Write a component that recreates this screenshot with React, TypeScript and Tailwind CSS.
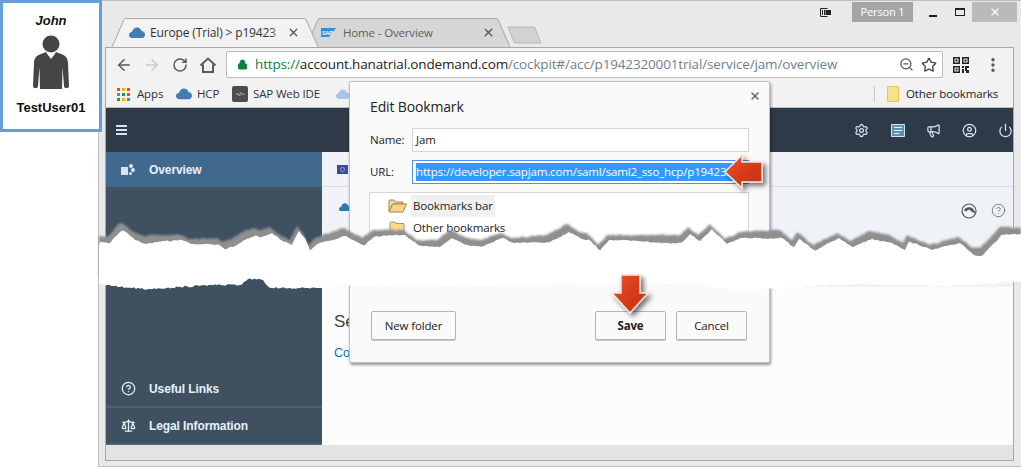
import { ArrowLeft, ArrowRight, RotateCw, Lock, ZoomOut, Star, X, EllipsisVertical, Settings, Megaphone, CircleUser, Power, CircleHelp, Scale } from "lucide-react";

const topEdge: [number, number][] = [[99,236],[107,237],[115,228],[120,223],[125,225],[133,232],[143,236],[157,235],[180,235],[190,239],[217,238],[223,242],[233,238],[243,232],[253,228],[260,230],[270,227],[280,235],[290,240],[297,226],[303,233],[308,245],[317,237],[330,233],[343,228],[353,233],[362,238],[373,230],[403,230],[417,240],[437,240],[450,230],[467,238],[480,240],[500,233],[513,238],[547,235],[567,224],[580,232],[587,233],[598,245],[607,235],[640,235],[680,235],[688,227],[698,235],[710,224],[725,239],[740,232],[780,230],[792,240],[797,232],[813,245],[837,233],[850,241],[870,231],[890,235],[903,243],[907,235],[930,245],[958,237],[973,248],[980,248],[1000,227],[1021,228]];
const bottomEdge: [number, number][] = [[99,284],[120,287],[150,289],[213,285],[240,285],[248,279],[263,280],[270,288],[320,288],[350,285],[380,286],[420,285],[470,286],[520,285],[560,284],[600,285],[660,283],[700,284],[712,288],[760,289],[800,287],[860,284],[940,286],[1021,282]];

function jag(points: [number, number][], start: number, amp: number) {
  const out: [number, number][] = [];
  let seed = start;
  for (let i = 0; i < points.length - 1; i++) {
    const [x1, y1] = points[i];
    const [x2, y2] = points[i + 1];
    const n = Math.max(1, Math.floor((x2 - x1) / 2));
    for (let k = 0; k < n; k++) {
      seed = (seed * 73 + 41) % 101;
      const j = k === 0 ? 0 : (seed / 101 - 0.5) * amp;
      out.push([x1 + ((x2 - x1) * k) / n, y1 + ((y2 - y1) * k) / n + j]);
    }
  }
  out.push(points[points.length - 1]);
  return out;
}
const jt = jag(topEdge, 7, 1.6);
const jw = jag(topEdge, 23, 1.2).map(([x, y]) => [x + 2, y + 6.5 + 1.5 * Math.sin(x / 17)] as [number, number]);
const jb = jag(bottomEdge, 11, 2);
const fmt = (p: [number, number][]) => p.map(([x, y]) => `${x.toFixed(1)},${y.toFixed(1)}`).join(" ");
const whitePoly = fmt([[99, 244], ...jw, [1021, 236], ...[...jb].reverse()]);
const shadowPoly = fmt([...jt, [1021, 275], [99, 275]]);

function Person() {
  return (
    <svg width="38" height="56" viewBox="0 0 38 56" fill="#454545">
      <circle cx="19" cy="10" r="8.5" />
      <path d="M9 20 L14 18 L19 24 L24 18 L29 20 C33 21 36 24 36 29 L37 52 C37 55 32 55 32 52 L30.5 33 L30 55 L8 55 L7.5 33 L6 52 C6 55 1 55 1 52 L2 29 C2 24 5 21 9 20Z" />
      <path d="M14.5 19 L19 20.5 L23.5 19 L19 25Z" fill="#fff" />
    </svg>
  );
}
function Cloud({ w = 16, c = "#417db3" }: { w?: number; c?: string }) {
  return (
    <svg width={w} height={(w * 12) / 17} viewBox="0 0 17 12" fill={c}>
      <path d="M4 12 C1.5 12 0 10.5 0 8.5 C0 6.5 1.5 5.2 3.2 5.2 C3.8 2.2 6 0.5 8.5 0.5 C11 0.5 12.6 2 13.2 4.2 C15.5 4.4 17 6 17 8 C17 10.4 15.4 12 13 12Z" />
    </svg>
  );
}
function Apps() {
  const c = ["#e8453c", "#f4b400", "#e8453c", "#4285f4", "#0f9d58", "#e8453c", "#0f9d58", "#f4b400", "#4285f4"];
  return (
    <div className="grid grid-cols-3 gap-[2px] w-[13px] h-[13px]">
      {c.map((b, i) => <div key={i} style={{ background: b }} className="w-[3px] h-[3px]" />)}
    </div>
  );
}
function Sap() {
  return (
    <svg width="15" height="9" viewBox="0 0 15 9">
      <path d="M0 0 H15 L8 9 H0Z" fill="#2f8fd8" />
      <text x="1" y="6.5" fontSize="5.5" fontWeight="700" fill="#fff" fontFamily="Liberation Sans">SAP</text>
    </svg>
  );
}
function FolderOpen() {
  return (
    <svg width="19" height="14" viewBox="0 0 19 14">
      <path d="M1 12 V2 Q1 1 2 1 H6 L7.5 3 H15 V5 H5 L1 12Z" fill="#f3d9a4" stroke="#a5824d" />
      <path d="M1 13 L4.5 5 H18.5 L15 13Z" fill="#fcd38b" stroke="#a5824d" />
    </svg>
  );
}
function FolderClosed() {
  return (
    <svg width="16" height="14" viewBox="0 0 16 14">
      <path d="M1 13 V2 Q1 1 2 1 H6 L7 2.5 H15 V13Z" fill="#fcd78f" stroke="#b79356" />
    </svg>
  );
}
function Qr() {
  return (
    <svg width="16" height="16" viewBox="0 0 16 16" fill="#222">
      <path fillRule="evenodd" d="M0 0H7V7H0ZM1.5 1.5V5.5H5.5V1.5ZM9 0H16V7H9ZM10.5 1.5V5.5H14.5V1.5ZM0 9H7V16H0ZM1.5 10.5V14.5H5.5V10.5Z" />
      <path d="M2.5 2.5H4.5V4.5H2.5ZM11.500 2.5H13.500V4.500H11.500ZM2.500 11.500H4.500V13.500H2.500ZM9 9H11V11H9ZM12 9H16V11H14V13H16V16H13V14H12ZM9 12H11V16H9Z" />
    </svg>
  );
}
function HomeIcon() {
  return (
    <svg width="18" height="18" viewBox="0 0 18 18" fill="none" stroke="#5a5a5a" strokeWidth="2" strokeLinejoin="miter">
      <path d="M1.500 9.500 L9 2.500 L16.500 9.500" />
      <path d="M4 8.500 V16 H14 V8.500" />
    </svg>
  );
}
function Tab({ active, width, children }: { active?: boolean; width: number; children: React.ReactNode }) {
  return (
    <div style={{ width }} className={`relative h-[29px] flex items-center ${active ? "z-10" : "-ml-[12px]"}`}>
      <svg className="absolute inset-0" width={width} height="29" viewBox={`0 0 ${width} 29`}>
        <path d={`M0 29 L12 1.5 Q13 0.500 14 0.500 H${width - 14} Q${width - 13} 0.500 ${width - 12} 1.500 L${width} 29`} fill={active ? "#f2f2f2" : "#d6d6d6"} stroke="#a9a9a9" />
      </svg>
      <div className="relative flex items-center w-full">{children}</div>
    </div>
  );
}
function NavRow({ icon, label, className = "" }: { icon: React.ReactNode; label: string; className?: string }) {
  return (
    <div className={`h-[35px] flex items-center text-[12px] tracking-[-0.1px] font-bold text-[#e8f1f8] font-['Liberation_Sans',sans-serif] ${className}`}>
      <div className="w-[43px] flex justify-center pl-[1px]">{icon}</div>
      <span>{label}</span>
    </div>
  );
}
function Btn({ children, className = "" }: { children: React.ReactNode; className?: string }) {
  return (
    <div className={`h-[29px] flex items-center justify-center border border-[#b5b5b5] rounded-[2px] bg-[#fafafa] shadow-[0_1px_0_#c8c8c8] text-[11.5px] text-[#222] ${className}`}>{children}</div>
  );
}

export default function App() {
  return (
    <div className="relative w-[1021px] h-[467px] overflow-hidden bg-white font-['Open_Sans',sans-serif] tracking-[-0.15px]">
      {/* browser window */}
      <div className="ml-[98px] w-[923px] h-[467px] border-l border-t border-b border-[#bdbdbd] bg-[#e9e9e9] flex flex-col">
        {/* tab strip */}
        <div className="relative h-[46px] shrink-0 flex items-end pl-[13px]">
          <Tab active width={206}>
            <div className="ml-[17px]"><Cloud /></div>
            <div className="relative ml-[5px] w-[134px] overflow-hidden">
              <span className="block w-[134px] overflow-hidden whitespace-nowrap text-[12px] text-[#333]">Europe (Trial) &gt; p19423</span>
              <div className="absolute right-0 top-0 bottom-0 w-[14px] bg-gradient-to-r from-transparent to-[#f2f2f2]" />
            </div>
            <X size={13} strokeWidth={2.5} className="ml-[3px] text-[#5a5a5a]" />
          </Tab>
          <Tab width={204}>
            <div className="ml-[15px]"><Sap /></div>
            <span className="ml-[7px] w-[139px] text-[11.5px] text-[#5d5d5d] whitespace-nowrap">Home - Overview</span>
            <X size={13} strokeWidth={2.5} className="text-[#5a5a5a]" />
          </Tab>
          <svg className="mb-[3px] -ml-[3px]" width="36" height="18" viewBox="0 0 36 18">
            <path d="M1 1 H26 Q27 1 28 2 L34 17 H9 Q8 17 7 16Z" fill="#d2d2d2" stroke="#b5b5b5" />
          </svg>
          {/* window controls */}
          <div className="absolute right-[4px] top-[1px] flex items-start">
            <svg width="11" height="11" viewBox="0 0 11 11" className="mt-[5px] mr-[21px]" fill="none" stroke="#222">
              <path d="M7.500 1.500H.5V9.500H7.500" /><path d="M2.500 3V8M4.500 3V8" /><rect x="6" y="3.500" width="4.500" height="4" fill="#222" />
            </svg>
            <div className="w-[61px] h-[20px] bg-[#a5a5a5] text-white text-[11px] flex items-center justify-center">Person 1</div>
            <div className="w-[27px] h-[20px] flex items-end justify-center pb-[5px] ml-[6px]"><div className="w-[8px] h-[2px] bg-[#222]" /></div>
            <div className="w-[27px] h-[20px] flex items-center justify-center"><div className="w-[10px] h-[8px] border border-[#222] border-t-2" /></div>
            <div className="w-[45px] h-[20px] bg-[#bababa] flex items-center justify-center ml-[-1px]"><X size={12} strokeWidth={2.5} className="text-white" /></div>
          </div>
        </div>

        {/* inner frame */}
        <div className="ml-[6px] mr-[7px] flex-1 min-h-0 border border-[#a8a8a8] flex flex-col bg-[#f2f2f2] mb-[5px]">
          {/* toolbar */}
          <div className="h-[33px] shrink-0 flex items-center pl-[9px]">
            <ArrowLeft size={18} strokeWidth={2} className="text-[#5a5a5a]" />
            <ArrowRight size={18} strokeWidth={2} className="ml-[10px] text-[#c9c9c9]" />
            <RotateCw size={16} strokeWidth={2.2} className="ml-[11px] text-[#5a5a5a]" />
            <div className="ml-[11px]"><HomeIcon /></div>
            <div className="ml-[9px] w-[717px] h-[27px] bg-white border border-[#bcbcbc] rounded-[2px] flex items-center pl-[10px] pr-[5px]">
              <Lock size={11} fill="#0b8043" className="text-[#0b8043]" />
              <div className="ml-[7px] flex-1 whitespace-nowrap overflow-hidden text-[13.5px] tracking-[-0.15px]">
                <span className="text-[#0b8043]">https://</span><span className="text-[#222]">account.hanatrial.ondemand.com</span><span className="text-[#6f7f8d]">/cockpit#/acc/p1942320001trial/service/jam/overview</span>
              </div>
              <ZoomOut size={15} className="text-[#555]" />
              <Star size={16} strokeWidth={2} className="ml-[7px] text-[#444]" />
            </div>
            <div className="ml-[10px]"><Qr /></div>
            <EllipsisVertical size={18} strokeWidth={2.5} className="ml-[15px] text-[#555]" />
          </div>
          {/* bookmarks */}
          <div className="h-[27px] shrink-0 flex items-center pl-[11px] text-[11.5px] text-[#333] border-b border-[#bcbcbc]">
            <Apps />
            <span className="ml-[7px] w-[26px]">Apps</span>
            <div className="ml-[13px]"><Cloud /></div>
            <span className="ml-[5px] w-[23px]">HCP</span>
            <div className="ml-[12px] w-[16px] h-[16px] rounded-[2px] bg-[#4d4d4d] flex items-center justify-center text-white text-[6px]">&lt;/&gt;</div>
            <span className="ml-[5px] w-[70px] whitespace-nowrap">SAP Web IDE</span>
            <div className="ml-[13px]"><Cloud c="#a9c4e6" w={14} /></div>
            <div className="ml-[524px] w-px h-[16px] bg-[#c9c9c9]" />
            <div className="ml-[12px] w-[12px] h-[16px] bg-[#fbe08c] border border-[#eac15c] rounded-[1px]" />
            <span className="ml-[7px] text-[#222]">Other bookmarks</span>
          </div>
          {/* app header */}
          <div className="h-[44px] shrink-0 bg-[#2e3a47] flex items-center pl-[10px] overflow-hidden text-[#cfe5f6]">
            <div className="w-[15px] flex flex-col gap-[2px]">
              <div className="h-[2px] bg-[#cfe5f6]" /><div className="h-[2px] bg-[#cfe5f6]" /><div className="h-[2px] bg-[#cfe5f6]" />
            </div>
            <Settings size={15} className="ml-[727px] shrink-0" />
            <svg width="14" height="13" viewBox="0 0 14 13" className="ml-[22px] shrink-0" fill="none" stroke="#cfe5f6">
              <path d="M.5.500H13.500V12.500H.5Z" fill="#5f8fb5" /><path d="M3 3.500H11M3 6.500H11M3 9.500H8" stroke="#e6f2fb" />
            </svg>
            <Megaphone size={15} className="ml-[21px] shrink-0" />
            <CircleUser size={15} className="ml-[21px] shrink-0" />
            <Power size={15} className="ml-[21px] shrink-0" />
          </div>
          {/* body */}
          <div className="flex flex-1 min-h-0">
            <div className="w-[216px] shrink-0 bg-[#3f5060] flex flex-col">
              <NavRow
                className="bg-[#41698e]"
                label="Overview"
                icon={<svg width="15" height="13" viewBox="0 0 15 13" fill="#d5e5f2"><path d="M0 4H7V12H0Z" /><circle cx="10" cy="3" r="2" /><circle cx="12" cy="7" r="2" /><circle cx="9.500" cy="10.500" r="1.500" /></svg>}
              />
              <div className="flex-1" />
              <NavRow label="Useful Links" icon={<CircleHelp size={15} />} />
              <div className="h-[2px] bg-[#4e6272]" />
              <NavRow label="Legal Information" icon={<Scale size={15} />} />
              <div className="h-[2px] bg-[#4e6272]" />
            </div>
            <div className="flex-1 flex flex-col bg-[#fcfcfc] min-w-0 overflow-hidden">
              <div className="h-[35px] shrink-0 bg-[#eff3f7] border-b border-[#d5dbe1] flex items-center pl-[15px]">
                <div className="w-[11px] h-[9px] bg-[#3c4a9e] flex items-center justify-center">
                  <div className="w-[5px] h-[5px] rounded-full border border-[#9a9fb8]" />
                </div>
              </div>
              <div className="h-[100px] shrink-0 bg-[#eff3f7] flex items-start pl-[17px] pt-[16px]">
                <Cloud w={12} c="#2a7ab8" />
                <div className="flex-1" />
                <svg width="16" height="16" viewBox="0 0 16 16" fill="none" stroke="#555" strokeWidth="1.200">
                  <circle cx="8" cy="8" r="7" /><path d="M4 8A4.500 4.500 0 0 1 12 8L10 7" strokeWidth="2.500" />
                </svg>
                <CircleHelp size={15} strokeWidth={1.300} className="ml-[14px] mr-[7px] text-[#666]" />
              </div>
              <div className="pl-[12px] pt-[24px] font-['Liberation_Sans',sans-serif] tracking-normal">
                <div className="text-[17px] leading-[22px] text-[#444]">Security</div>
                <div className="mt-[12px] text-[12.500px] leading-[16px] text-[#0a6ebd]">Configure</div>
              </div>
            </div>
          </div>
          {/* scrollbar */}
          <div className="h-[15px] shrink-0 bg-[#e3e3e3]" />
        </div>
      </div>

      {/* dialog */}
      <div className="absolute left-[349px] top-[81px] w-[421px] h-[282px] bg-[#fafafa] border border-[#c2c2c2] rounded-[2px] shadow-[1px_2px_3px_rgba(0,0,0,0.4)] flex flex-col pl-[20px] pr-[20px] text-[11.5px] text-[#222]">
        <div className="flex items-center justify-between h-[46px] pt-[3px]">
          <span className="text-[14px] text-[#222]">Edit Bookmark</span>
          <X size={12} strokeWidth={3} className="-mt-[22px] -mr-[12px] text-[#666]" />
        </div>
        <div className="flex items-center h-[24px]">
          <span className="w-[42px]">Name:</span>
          <div className="flex-1 h-[24px] bg-white border border-[#d6d6d6] pl-[3px] flex items-center">Jam</div>
        </div>
        <div className="flex items-center h-[24px] mt-[8px]">
          <span className="w-[42px]">URL:</span>
          <div className="flex-1 min-w-0 h-[24px] bg-white border border-[#4d90fe] pl-[3px] flex items-center overflow-hidden">
            <span className="bg-[#3399ff] text-white whitespace-nowrap">https://developer.sapjam.com/saml/saml2_sso_hcp/p1942320001trial</span>
          </div>
        </div>
        <div className="mt-[8px] -ml-[1px] h-[84px] bg-white border border-[#d6d6d6] pt-[2px] pl-[18px]">
          <div className="flex items-center h-[22px]">
            <FolderOpen />
            <span className="ml-[4px] bg-[#f0f0f0] h-[22px] px-[2px] flex items-center">Bookmarks bar</span>
          </div>
          <div className="flex items-center h-[22px] pl-[1px]">
            <FolderClosed />
            <span className="ml-[8px]">Other bookmarks</span>
          </div>
        </div>
        <div className="flex mt-[35px] ml-[1px] mr-[1px]">
          <Btn className="w-[85px]">New folder</Btn>
          <Btn className="w-[71px] ml-[139px] font-bold">Save</Btn>
          <Btn className="w-[71px] ml-[10px]">Cancel</Btn>
        </div>
      </div>

      {/* torn paper + callout arrows */}
      <svg className="absolute inset-0 pointer-events-none" width="1021" height="467" viewBox="0 0 1021 467">
        <defs>
          <filter id="soft" x="-5%" y="-20%" width="110%" height="140%"><feGaussianBlur stdDeviation="0.900" /></filter>
          <filter id="drop" x="-30%" y="-30%" width="170%" height="170%"><feDropShadow dx="3" dy="3" stdDeviation="2.500" floodColor="#000" floodOpacity="0.550" /></filter>
          <linearGradient id="red" x1="0" y1="0" x2="1" y2="1">
            <stop offset="0" stopColor="#e8573a" /><stop offset="0.500" stopColor="#d63c18" /><stop offset="1" stopColor="#c5300f" />
          </linearGradient>
        </defs>
        <polygon points={shadowPoly} fill="#8f8f8f" filter="url(#soft)" />
        <polygon points={whitePoly} fill="#fff" />
        <polygon points="725,172 742,155 742,162 762,162 762,182 742,182 742,188" fill="url(#red)" stroke="#f3e4e0" strokeWidth="1.500" filter="url(#drop)" />
        <polygon points="630,313 612,293 621,293 621,275 640,275 640,293 648,293" fill="url(#red)" stroke="#f3e4e0" strokeWidth="1.500" filter="url(#drop)" />
      </svg>

      {/* user card */}
      <div className="absolute left-0 top-0 w-[102px] h-[132px] bg-white border-[3px] border-[#649fd6] flex flex-col items-center font-['Liberation_Sans',sans-serif] text-[13px] tracking-normal text-[#111]">
        <span className="font-bold italic mt-[10px] leading-[16px]">John</span>
        <div className="mt-[5px]"><Person /></div>
        <span className="font-bold mt-[10px] leading-[16px]">TestUser01</span>
      </div>
    </div>
  );
}
